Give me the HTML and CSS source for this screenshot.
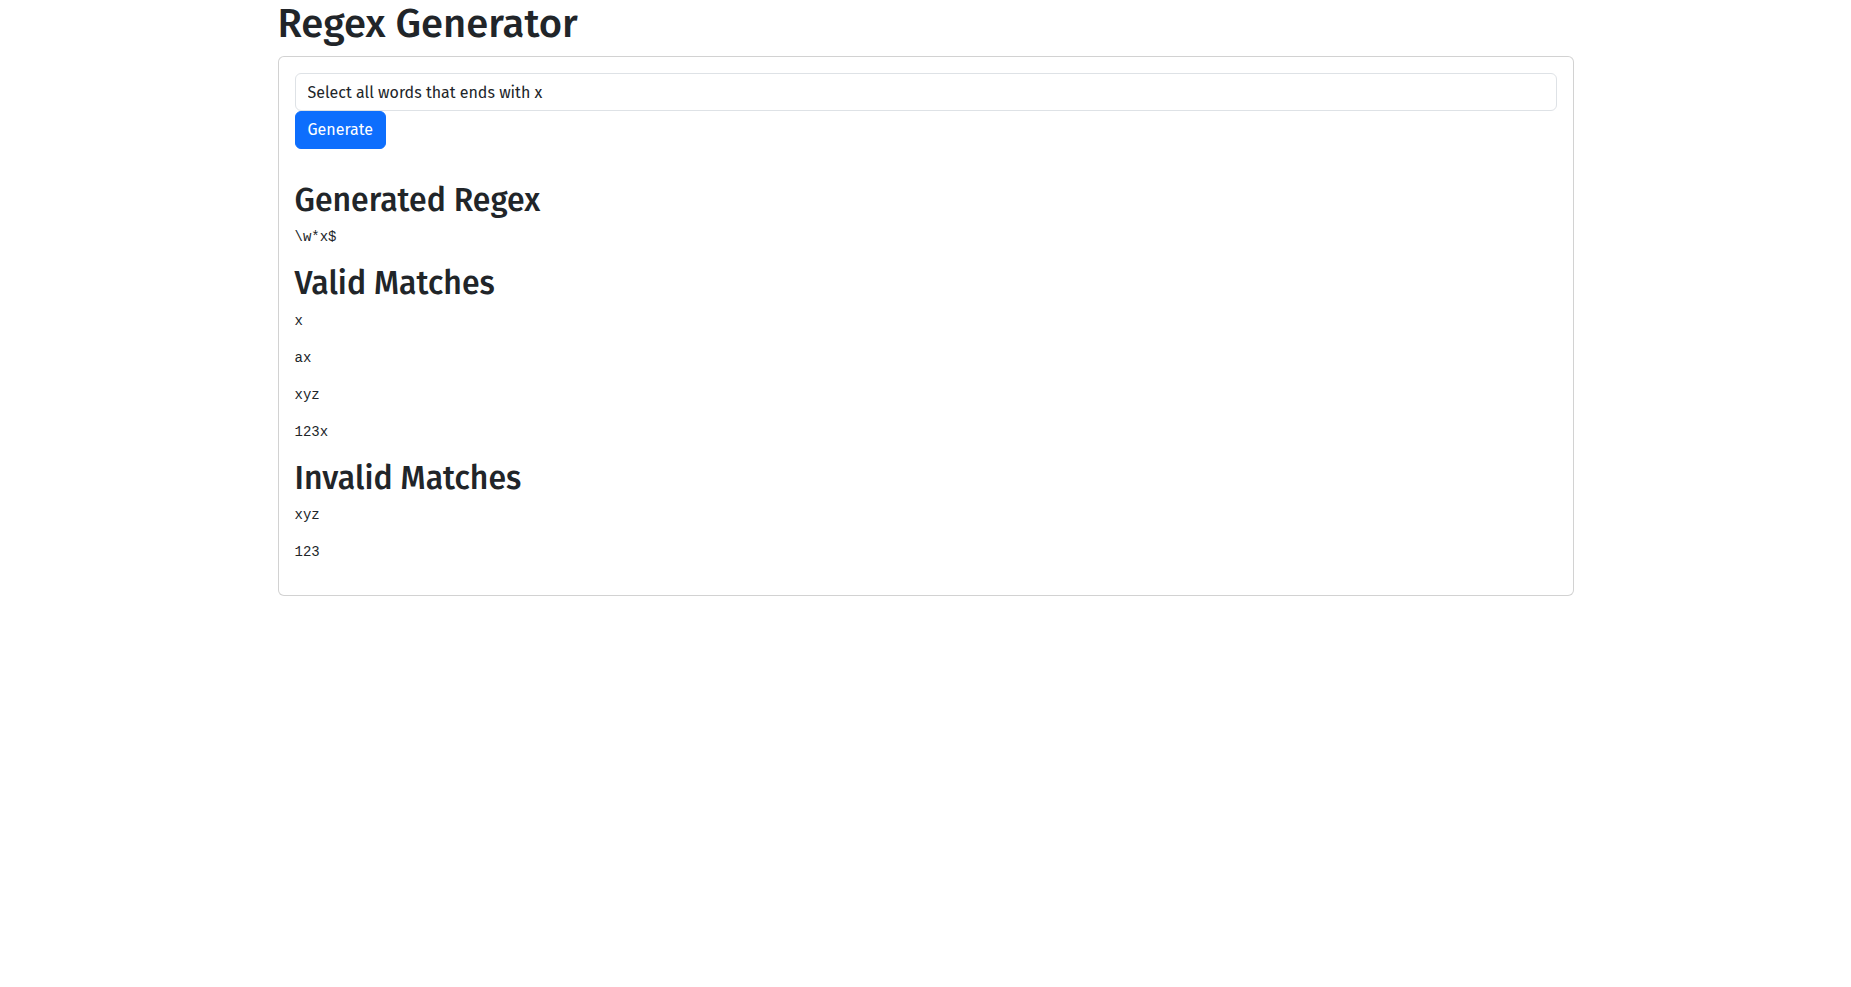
FILE: index.html
```html
<!DOCTYPE html>
<html lang="en">
<head>
<meta charset="utf-8">
<title>Regex Generator</title>
<link rel="stylesheet" href="styles.css">
</head>
<body>
<div class="container">
  <h1 class="title">Regex Generator</h1>
  <div class="card">
    <div class="card-body">
      <form class="gen-form">
        <input class="text-input" type="text" value="Select all words that ends with x">
        <button class="btn-primary" type="button">Generate</button>
      </form>
      <div class="results">
        <h2 class="section-title">Generated Regex</h2>
        <pre class="mono">\w*x$</pre>
        <h2 class="section-title">Valid Matches</h2>
        <pre class="mono">x</pre>
        <pre class="mono">ax</pre>
        <pre class="mono">xyz</pre>
        <pre class="mono">123x</pre>
        <h2 class="section-title">Invalid Matches</h2>
        <pre class="mono">xyz</pre>
        <pre class="mono">123</pre>
      </div>
    </div>
  </div>
</div>
</body>
</html>
```
FILE: styles.css
```css
* { box-sizing: border-box; }
html, body { margin: 0; padding: 0; background: #fff; }
body {
  font-family: "Fira Sans", "Open Sans", "Noto Sans", sans-serif;
  font-size: 16px;
  line-height: 1.5;
  color: #212529;
}
.container {
  max-width: 1320px;
  margin: 0 auto;
  padding: 0 12px;
}
.title {
  font-size: 40px;
  font-weight: 500;
  line-height: 1.2;
  margin: 0 0 8px;
}
.card {
  border: 1px solid rgba(0,0,0,0.175);
  border-radius: 6px;
  background: #fff;
}
.card-body { padding: 16px; }
.gen-form { display: flex; flex-direction: column; align-items: flex-start; margin: 0; }
.text-input {
  width: 100%;
  height: 38px;
  padding: 6px 12px;
  font: inherit;
  color: #212529;
  border: 1px solid #dee2e6;
  border-radius: 6px;
  background: #fff;
  outline: none;
}
.btn-primary {
  height: 38px;
  padding: 6px 12px;
  font: inherit;
  line-height: 24px;
  color: #fff;
  background: #0d6efd;
  border: 1px solid #0d6efd;
  border-radius: 6px;
}
.results { margin-top: 32px; }
.section-title {
  font-size: 32px;
  font-weight: 500;
  line-height: 1.2;
  margin: 0 0 8px;
}
.mono {
  font-family: "Liberation Mono", "DejaVu Sans Mono", monospace;
  font-size: 14px;
  line-height: 21px;
  margin: 0 0 16px;
  color: #212529;
}
```
